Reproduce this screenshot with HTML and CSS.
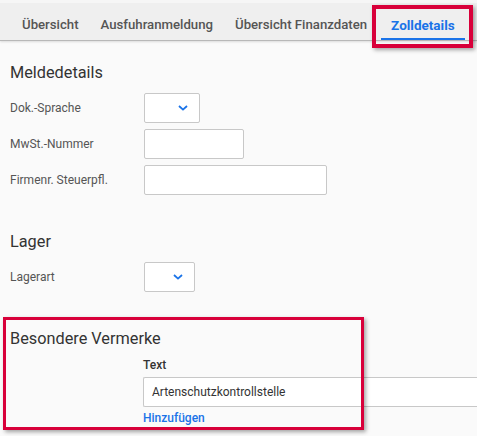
FILE: index.html
```html
<!DOCTYPE html>
<html lang="de">
<head>
<meta charset="utf-8">
<link rel="stylesheet" href="styles.css">
</head>
<body>
<nav class="tabbar">
  <div class="tab">Übersicht</div>
  <div class="tab">Ausfuhranmeldung</div>
  <div class="tab">Übersicht Finanzdaten</div>
  <div class="tab active">Zolldetails</div>
</nav>
<main class="content">
  <section class="section">
    <h2 class="heading">Meldedetails</h2>
    <div class="rows">
      <div class="row">
        <label class="label">Dok.-Sprache</label>
        <div class="field select w56">
          <svg class="chev" width="10" height="6" viewBox="0 0 10 6"><path d="M1 1l4 3.6L9 1" fill="none" stroke="#1a73e8" stroke-width="1.8"/></svg>
        </div>
      </div>
      <div class="row">
        <label class="label">MwSt.-Nummer</label>
        <div class="field w100"></div>
      </div>
      <div class="row">
        <label class="label">Firmenr. Steuerpfl.</label>
        <div class="field w183"></div>
      </div>
    </div>
  </section>
  <section class="section">
    <h2 class="heading">Lager</h2>
    <div class="rows">
      <div class="row">
        <label class="label">Lagerart</label>
        <div class="field select w51">
          <svg class="chev" width="10" height="6" viewBox="0 0 10 6"><path d="M1 1l4 3.6L9 1" fill="none" stroke="#1a73e8" stroke-width="1.8"/></svg>
        </div>
      </div>
    </div>
  </section>
  <section class="section">
    <h2 class="heading">Besondere Vermerke</h2>
    <div class="notes">
      <div class="notes-label">Text</div>
      <div class="field wide">Artenschutzkontrollstelle</div>
      <a class="add">Hinzufügen</a>
    </div>
  </section>
</main>
<div class="mark mark-tab"></div>
<div class="mark mark-notes"></div>
</body>
</html>
```
FILE: styles.css
```css
html, body {
  margin: 0;
  padding: 0;
}
body {
  background: #fafafa;
  font-family: Roboto, "Liberation Sans", Arial, sans-serif;
  color: #333;
  width: 477px;
  height: 436px;
  overflow: hidden;
  position: relative;
}
.tabbar {
  display: flex;
  box-sizing: border-box;
  height: 41px;
  padding-left: 11px;
  background: linear-gradient(#f6f6f6 0, #f6f6f6 3px, #efefef 3px);
  border-bottom: 1px solid #b8b8b8;
  box-shadow: 0 1px 2px rgba(0,0,0,0.12);
}
.tab {
  box-sizing: border-box;
  height: 40px;
  padding: 17px 11px 0;
  font-size: 13.2px;
  line-height: 16px;
  font-weight: 500;
  color: #555;
  white-space: nowrap;
}
.tab.active {
  color: #1a73e8;
  font-weight: 700;
  font-size: 13.5px;
  margin-left: 3px;
  padding: 17px 10px 0;
  border-bottom: 2px solid #1a73e8;
}
.content {
  padding: 20px 0 0 10px;
}
.section + .section {
  margin-top: 35px;
}
.heading {
  margin: 0;
  font-size: 16.3px;
  line-height: 24px;
  font-weight: 400;
  color: #333;
}
.rows {
  margin-top: 8px;
  display: flex;
  flex-direction: column;
  gap: 6px;
}
.row {
  display: flex;
  align-items: center;
}
.label {
  width: 134px;
  font-size: 12px;
  color: #555;
}
.field {
  box-sizing: border-box;
  height: 30px;
  border: 1px solid #c8c8c8;
  border-radius: 2px;
  background: #fff;
}
.select {
  display: flex;
  align-items: center;
  justify-content: flex-end;
  padding-right: 11px;
}
.chev { display: block; }
.w56 { width: 56px; }
.w51 { width: 51px; }
.w100 { width: 100px; }
.w183 { width: 183px; }
.notes {
  margin-left: 133px;
  padding-top: 6px;
}
.notes-label {
  font-size: 12px;
  line-height: 16px;
  font-weight: 500;
  color: #333;
}
.wide {
  margin-top: 4px;
  width: 334px;
  border-right: none;
  border-radius: 2px 0 0 2px;
  padding-left: 8px;
  font-size: 12px;
  line-height: 28px;
  color: #333;
}
.add {
  display: block;
  margin-top: 3px;
  font-size: 12px;
  line-height: 16px;
  font-weight: 500;
  color: #1a73e8;
}
.mark {
  position: absolute;
  box-sizing: border-box;
  border: 3px solid #d8003a;
  box-shadow: 2px 2px 4px rgba(0,0,0,0.35);
}
.mark-tab {
  left: 372px;
  top: 5px;
  width: 101px;
  height: 43px;
  border-width: 4px;
}
.mark-notes {
  left: 3px;
  top: 317px;
  width: 361px;
  height: 113px;
}
```
